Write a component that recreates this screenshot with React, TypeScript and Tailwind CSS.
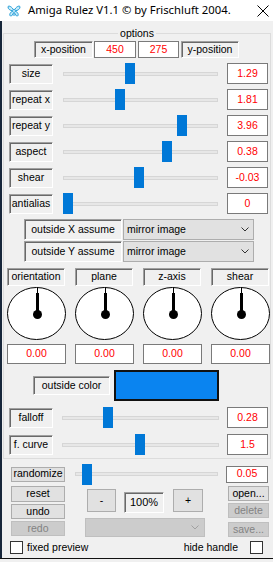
import React from "react";

const sunk =
  "flex items-center justify-center border border-t-[#a0a0a0] border-l-[#a0a0a0] border-r-white border-b-white shadow-[inset_1px_1px_0_#696969]";
const field =
  "flex items-center justify-center bg-white border border-[#7a7a7a] text-[#ff0000]";
const btn = "flex items-center justify-center bg-[#e1e1e1] border border-[#adadad]";
const btnOff =
  "flex items-center justify-center bg-[#cccccc] border border-[#bfbfbf] text-[#838383]";

const sliders = [
  { label: "size", pos: 62, value: "1.29" },
  { label: "repeat x", pos: 52, value: "1.81" },
  { label: "repeat y", pos: 114, value: "3.96" },
  { label: "aspect", pos: 99, value: "0.38" },
  { label: "shear", pos: 71, value: "-0.03" },
  { label: "antialias", pos: 0, value: "0" },
];

const dials = ["orientation", "plane", "z-axis", "shear"];

function Slider({ pos, track }: { pos: number; track: string }) {
  return (
    <div className={`relative h-[21px] flex items-center ${track}`}>
      <div className="w-full h-[4px] bg-[#e7e7e7] border border-[#d6d6d6]" />
      <div className="absolute top-0 w-[10px] h-[21px] bg-[#0078d7]" style={{ left: pos }} />
    </div>
  );
}

function Chevron({ color }: { color: string }) {
  return (
    <svg width="8" height="5" viewBox="0 0 8 5">
      <path d="M0.5 0.5 L4 4 L7.5 0.5" stroke={color} fill="none" />
    </svg>
  );
}

function Dial() {
  return (
    <svg width="60" height="53" viewBox="0 0 60 53">
      <ellipse cx="29.5" cy="26.5" rx="29" ry="26" fill="#fff" stroke="#000" />
      <line x1="30.5" y1="0.5" x2="30.5" y2="7" stroke="#000" />
      <rect x="29" y="6" width="3" height="21" fill="#000" />
      <circle cx="30.5" cy="27.5" r="4.5" fill="#000" />
    </svg>
  );
}

function Butterfly() {
  return (
    <svg width="14" height="14" viewBox="0 0 14 14">
      <path d="M7 5 L7 12" stroke="#1f9bd7" />
      <path
        d="M6.5 6 C5 2.5 1 1 1 3 C1 5 3 6.5 6 7 C3 8 2 11 3.5 12 C5 12.5 6 10 6.5 8.5"
        fill="#c8ecfa"
        stroke="#1f9bd7"
      />
      <path
        d="M7.5 6 C9 2.5 13 1 13 3 C13 5 11 6.5 8 7 C11 8 12 11 10.5 12 C9 12.5 8 10 7.5 8.5"
        fill="#c8ecfa"
        stroke="#1f9bd7"
      />
    </svg>
  );
}

export default function App() {
  return (
    <div className="w-[273px] h-[562px] overflow-hidden bg-[#f0f0f0] flex flex-col text-[10.5px] text-black font-['Liberation_Sans',Arial,sans-serif]">
      {/* title bar */}
      <div className="h-[21px] bg-white flex items-center shrink-0">
        <div className="ml-[7px]">
          <Butterfly />
        </div>
        <span className="ml-[7px] text-[11.3px] font-['Noto_Sans',sans-serif] whitespace-nowrap">
          Amiga Rulez V1.1 © by Frischluft 2004.
        </span>
        <svg className="ml-auto mr-[4px]" width="12" height="12" viewBox="0 0 12 12">
          <path d="M0.5 0.5 L11.5 11.5 M11.5 0.5 L0.5 11.5" stroke="#000" />
        </svg>
      </div>

      <div className="flex-1 flex min-h-0">
        <div className="w-[2px] bg-[#17263a]" />
        <div className="flex-1 flex flex-col pl-[1px] pr-[2px]">
          <fieldset className="mt-[6px] border border-[#dcdcdc] pb-[3px] flex flex-col">
            <legend className="mx-auto px-[2px] leading-[13px]">options</legend>

            <div className="mt-[1px] h-[17px] flex pl-[30px]">
              <div className={`${sunk} w-[59px]`}>x-position</div>
              <div className={`${field} ml-[1px] w-[42px]`}>450</div>
              <div className={`${field} ml-[2px] w-[41px]`}>275</div>
              <div className={`${sunk} ml-[2px] w-[58px]`}>y-position</div>
            </div>

            <div className="mt-[5px] flex flex-col gap-[5px]">
              {sliders.map((s) => (
                <div key={s.label} className="h-[21px] flex items-center pl-[5px]">
                  <div className={`${sunk} w-[44px] h-[20px] whitespace-nowrap`}>{s.label}</div>
                  <div className="ml-[10px]">
                    <Slider pos={s.pos} track="w-[155px]" />
                  </div>
                  <div className={`${field} ml-[9px] w-[41px] h-[21px]`}>{s.value}</div>
                </div>
              ))}
            </div>

            <div className="mt-[5px] flex flex-col gap-[1px] pl-[20px]">
              {["outside X assume", "outside Y assume"].map((t) => (
                <div key={t} className="h-[21px] flex">
                  <div className={`${sunk} w-[98px] whitespace-nowrap`}>{t}</div>
                  <div className="ml-[1px] w-[131px] bg-[#e1e1e1] border border-[#adadad] flex items-center pl-[3px] pr-[4px]">
                    <span className="flex-1">mirror image</span>
                    <Chevron color="#333" />
                  </div>
                </div>
              ))}
            </div>

            <div className="mt-[6px] flex gap-[9px] pl-[3px]">
              {dials.map((d) => (
                <div key={d} className="w-[59px] flex flex-col">
                  <div className={`${sunk} h-[18px] w-[58px]`}>{d}</div>
                  <div className="mt-[1px]">
                    <Dial />
                  </div>
                  <div className={`${field} mt-[4px] h-[20px] w-[59px]`}>0.00</div>
                </div>
              ))}
            </div>

            <div className="mt-[6px] h-[31px] flex items-center pl-[29px]">
              <div className={`${sunk} w-[77px] h-[19px]`}>outside color</div>
              <div className="ml-[4px] w-[105px] h-[31px] bg-[#0a84f0] border-2 border-[#111]" />
            </div>

            <div className="mt-[6px] h-[21px] flex items-center pl-[5px]">
              <div className={`${sunk} w-[44px] h-[20px]`}>falloff</div>
              <div className="ml-[9px]">
                <Slider pos={41} track="w-[157px]" />
              </div>
              <div className={`${field} ml-[8px] w-[41px] h-[21px]`}>0.28</div>
            </div>
            <div className="mt-[6px] h-[21px] flex items-center pl-[5px]">
              <div className={`${sunk} w-[44px] h-[20px]`}>f. curve</div>
              <div className="ml-[9px]">
                <Slider pos={73} track="w-[157px]" />
              </div>
              <div className={`${field} ml-[8px] w-[41px] h-[21px]`}>1.5</div>
            </div>
          </fieldset>

          <div className="mt-[4px] h-[22px] flex items-center pl-[8px]">
            <div className={`${btn} w-[54px] h-[15px]`}>randomize</div>
            <div className="ml-[10px]">
              <Slider pos={7} track="w-[143px]" />
            </div>
            <div className={`${field} ml-[8px] w-[42px] h-[17px]`}>0.05</div>
          </div>

          <div className="flex pl-[8px]">
            <div className="flex flex-col w-[54px]">
              <div className={`${btn} mt-[1px] h-[16px]`}>reset</div>
              <div className={`${btn} mt-[2px] h-[15px]`}>undo</div>
              <div className={`${btnOff} mt-[2px] h-[15px]`}>redo</div>
            </div>
            <div className="ml-[20px] w-[120px] flex flex-col">
              <div className="mt-[4px] flex pl-[2px]">
                <div className={`${btn} w-[29px] h-[23px]`}>-</div>
                <div className="ml-[8px] mt-[3px] w-[40px] h-[21px] flex items-center justify-center bg-[#f0f0f0] border border-t-[#a0a0a0] border-l-[#a0a0a0] border-r-white border-b-white shadow-[inset_1px_1px_0_#696969] text-[11px]">
                  100%
                </div>
                <div className={`${btn} ml-[9px] w-[30px] h-[23px]`}>+</div>
              </div>
              <div className="mt-[5px] h-[19px] bg-[#cccccc] border border-[#bfbfbf] flex items-center justify-end pr-[5px]">
                <Chevron color="#a0a0a0" />
              </div>
            </div>
            <div className="ml-[23px] w-[41px] flex flex-col">
              <div className={`${btn} mt-[1px] h-[15px]`}>open...</div>
              <div className={`${btnOff} mt-[2px] h-[15px]`}>delete</div>
              <div className={`${btnOff} mt-[4px] h-[15px]`}>save...</div>
            </div>
          </div>

          <div className="mt-[4px] h-[13px] flex items-center pl-[7px] pr-[8px]">
            <div className="w-[13px] h-[13px] bg-white border border-[#333]" />
            <span className="ml-[4px]">fixed preview</span>
            <span className="ml-auto">hide handle</span>
            <div className="ml-[12px] w-[13px] h-[13px] bg-white border border-[#333]" />
          </div>
        </div>
      </div>

      <div className="h-[1px] bg-[#111] shrink-0" />
      <div className="h-[3px] shrink-0" />
    </div>
  );
}
